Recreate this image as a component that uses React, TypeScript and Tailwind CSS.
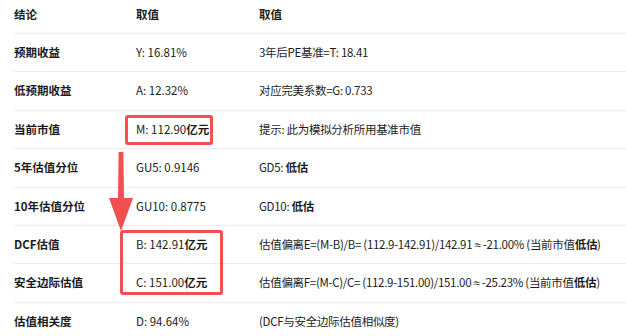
import React from 'react';

type Row = {
  label: string;
  value: React.ReactNode;
  note: React.ReactNode;
};

const B = ({ children }: { children: React.ReactNode }) => <span className="font-bold">{children}</span>;

// the CJK font draws ≈ full-width, so take it from a latin face
const Approx = () => <span style={{ fontFamily: '"Noto Sans", sans-serif' }}>≈</span>;

const rows: Row[] = [
  { label: '预期收益', value: 'Y: 16.81%', note: '3年后PE基准=T: 18.41' },
  { label: '低预期收益', value: 'A: 12.32%', note: '对应完美系数=G: 0.733' },
  { label: '当前市值', value: <>M: 112.90<B>亿元</B></>, note: '提示: 此为模拟分析所用基准市值' },
  { label: '5年估值分位', value: 'GU5: 0.9146', note: <>GD5: <B>低估</B></> },
  { label: '10年估值分位', value: 'GU10: 0.8775', note: <>GD10: <B>低估</B></> },
  {
    label: 'DCF估值',
    value: <>B: 142.91<B>亿元</B></>,
    note: <>估值偏离E=(M-B)/B= (112.9-142.91)/142.91 <Approx /> -21.00% (当前市值<B>低估</B>)</>,
  },
  {
    label: '安全边际估值',
    value: <>C: 151.00<B>亿元</B></>,
    note: <>估值偏离F=(M-C)/C= (112.9-151.00)/151.00 <Approx /> -25.23% (当前市值<B>低估</B>)</>,
  },
  { label: '估值相关度', value: 'D: 94.64%', note: '(DCF与安全边际估值相似度)' },
];

const App = () => {
  return (
    <div
      className="relative h-[336px] w-[626px] overflow-hidden bg-white pl-[14px] text-[11.5px] text-[#1c1c1c]"
      style={{ fontFamily: '"Noto Sans CJK SC", "Noto Sans", sans-serif' }}
    >
      <div className="grid h-[34px] grid-cols-[122px_123px_1fr] items-center border-b border-[#ececec] pb-1 font-bold">
        <div>结论</div>
        <div>取值</div>
        <div>取值</div>
      </div>
      {rows.map((r) => (
        <div
          key={r.label}
          className="grid h-[38.4px] grid-cols-[122px_123px_1fr] items-center border-b border-[#ececec] whitespace-nowrap"
        >
          <div className="font-bold">{r.label}</div>
          <div>{r.value}</div>
          <div className="tracking-[-0.3px]">{r.note}</div>
        </div>
      ))}

      {/* highlight boxes */}
      <div className="pointer-events-none absolute left-[125px] top-[115px] h-[30px] w-[88px] rounded-[3px] border-[3px] border-[#f0504f]" />
      <div className="pointer-events-none absolute left-[120px] top-[230px] h-[65px] w-[103px] rounded-[3px] border-[3px] border-[#f0504f]" />

      {/* arrow */}
      <svg className="pointer-events-none absolute left-[106px] top-[152px]" width="30" height="80" viewBox="0 0 30 80">
        <path d="M12.6 0 L17.4 0 L18 46 L27 46 L15 79 L3 46 L12 46 Z" fill="#f0504f" />
      </svg>
    </div>
  );
};

export default App;
